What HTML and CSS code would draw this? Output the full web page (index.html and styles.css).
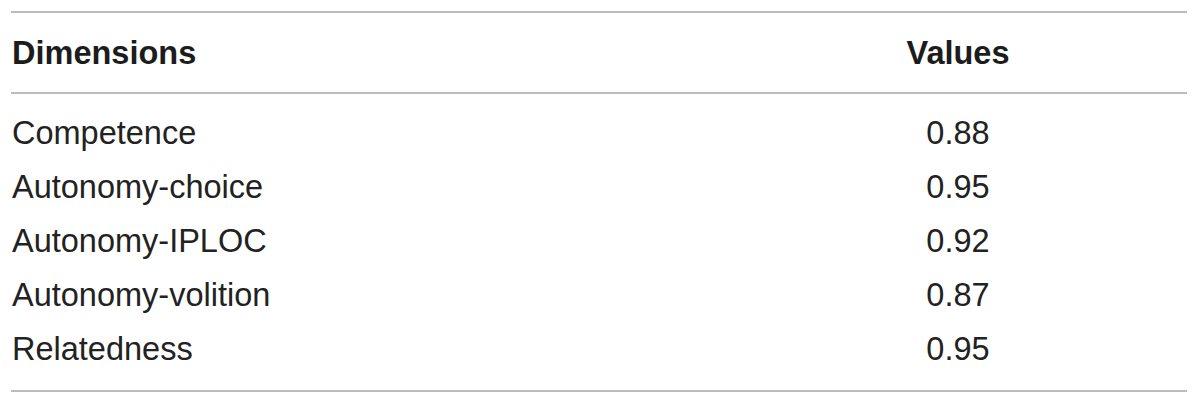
FILE: index.html
```html
<!DOCTYPE html>
<html lang="en">
<head>
    <meta charset="UTF-8">
    <title>Dimensions and Values</title>
    <link rel="stylesheet" href="styles.css">
</head>
<body>
    <table class="scores">
        <thead>
            <tr>
                <th class="dim">Dimensions</th>
                <th class="val">Values</th>
            </tr>
        </thead>
        <tbody>
            <tr><td class="dim">Competence</td><td class="val">0.88</td></tr>
            <tr><td class="dim">Autonomy-choice</td><td class="val">0.95</td></tr>
            <tr><td class="dim">Autonomy-IPLOC</td><td class="val">0.92</td></tr>
            <tr><td class="dim">Autonomy-volition</td><td class="val">0.87</td></tr>
            <tr><td class="dim">Relatedness</td><td class="val">0.95</td></tr>
        </tbody>
    </table>
</body>
</html>
```

FILE: styles.css
```css
* {
    margin: 0;
    padding: 0;
    box-sizing: border-box;
}

body {
    font-family: 'Liberation Sans', Arial, sans-serif;
    background-color: #ffffff;
    color: #222222;
    padding: 11px 13px 0 11px;
}

.scores {
    width: 1176px;
    border-collapse: collapse;
    border-top: 2px solid #bcbcbc;
    border-bottom: 2px solid #bcbcbc;
    font-size: 32.5px;
    line-height: 54px;
}

.scores th {
    font-weight: bold;
    color: #1c1c1c;
    padding: 13px 0 12px;
    border-bottom: 2px solid #bcbcbc;
}

.scores td {
    padding: 0;
}

.scores tbody tr:first-child td {
    padding-top: 12px;
}

.scores tbody tr:last-child td {
    padding-bottom: 14px;
}

.dim {
    text-align: left;
    padding-left: 1px !important;
}

.val {
    width: 458px;
    text-align: center;
}
```
